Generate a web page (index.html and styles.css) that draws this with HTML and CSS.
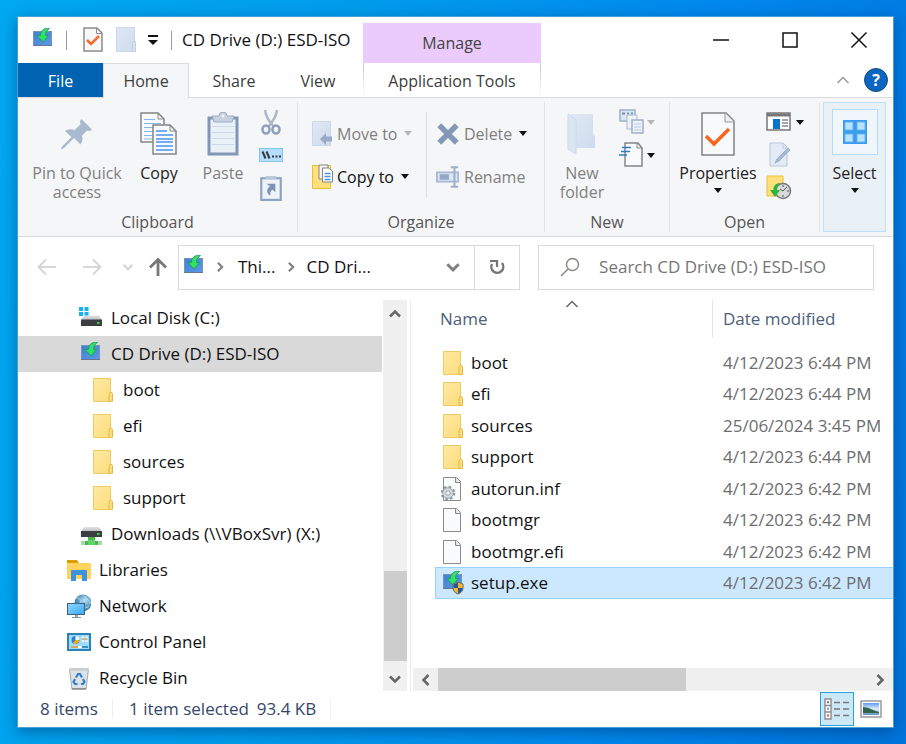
FILE: index.html
```html
<!DOCTYPE html>
<html lang="en">
<head>
<meta charset="utf-8">
<title>CD Drive (D:) ESD-ISO</title>
<link rel="stylesheet" href="styles.css">
</head>
<body>
<svg class="sprite" aria-hidden="true">
  <defs>
    <linearGradient id="g-blue" x1="0" y1="0" x2="1" y2="1"><stop offset="0" stop-color="#3f7fd0"/><stop offset="1" stop-color="#5b9ae8"/></linearGradient>
    <linearGradient id="g-green" x1="0" y1="0" x2="0" y2="1"><stop offset="0" stop-color="#3fd878"/><stop offset="1" stop-color="#24e85a"/></linearGradient>
    <linearGradient id="g-folder" x1="0" y1="0" x2="1" y2="1"><stop offset="0" stop-color="#ffe9a3"/><stop offset="1" stop-color="#fcdc7c"/></linearGradient>
    <linearGradient id="g-pale" x1="0" y1="0" x2="1" y2="1"><stop offset="0" stop-color="#dfe8f5"/><stop offset="1" stop-color="#cfdbec"/></linearGradient>
    <linearGradient id="g-disk" x1="0" y1="0" x2="0" y2="1"><stop offset="0" stop-color="#e4e4e6"/><stop offset="1" stop-color="#b4b6ba"/></linearGradient>
    <linearGradient id="g-screen" x1="0" y1="0" x2="1" y2="1"><stop offset="0" stop-color="#8fd8ff"/><stop offset="1" stop-color="#3aa6f4"/></linearGradient>
    <radialGradient id="g-globe" cx=".6" cy=".35" r=".7"><stop offset="0" stop-color="#c2e2f2"/><stop offset=".5" stop-color="#5fa3c8"/><stop offset="1" stop-color="#2c6d9c"/></radialGradient>
    <linearGradient id="g-photo" x1="0" y1="0" x2="0" y2="1"><stop offset="0" stop-color="#5e98f0"/><stop offset=".5" stop-color="#e2f0fb"/><stop offset="1" stop-color="#5c8fc0"/></linearGradient>
  </defs>
  <symbol id="i-install" viewBox="0 0 24 24">
    <rect x="2" y="3" width="19" height="15" fill="url(#g-blue)"/>
    <path d="M2 17.500h19" stroke="#66768f"/>
    <path d="M2.500 3v14M20.500 3v14M2 3.500h19" stroke="#7b93b8" fill="none"/>
    <path d="M18.500.500C12.500-.500 9.500 3 9.500 7.500H6L12 14l5.500-6.500H14.500c0-3 1-5 4-7z" fill="url(#g-green)" stroke="#149c50" stroke-width=".8"/>
  </symbol>
  <symbol id="i-setup" viewBox="0 0 24 24">
    <use href="#i-install"/>
    <path d="M17 11l5 2v4c0 3-2 5-5 6-3-1-5-3-5-6v-4z" fill="#f4b62c" stroke="#5d6878"/>
    <path d="M17 11.500l-4.500 2V17H17zM17 17v5.500c3-1 4.500-3 4.500-5.500z" fill="#23579c"/>
  </symbol>
  <symbol id="i-folder" viewBox="0 0 24 24">
    <path d="M2.500.500h17v14h1v9h-18z" fill="url(#g-folder)" stroke="#efca5e"/>
    <path d="M18 23.500v-7l1-2h1.500l1 1v8z" fill="#fbdd80" stroke="#e5b840"/>
  </symbol>
  <symbol id="i-paper" viewBox="0 0 24 24">
    <path d="M2.500.500h13l4 4v19h-17z" fill="#fafbfc" stroke="#8b8b8b"/>
    <path d="M14.500.500v5h5" fill="#e4e6e8" stroke="#8b8b8b"/>
  </symbol>
  <symbol id="i-inf" viewBox="0 0 24 24">
    <use href="#i-paper"/>
    <circle cx="7" cy="16" r="6" fill="none" stroke="#8c949c" stroke-width="2.500" stroke-dasharray="2.400 2.310"/>
    <circle cx="7" cy="16" r="4" fill="#fff" stroke="#d3dae1" stroke-width="3"/>
    <circle cx="7" cy="16" r="2.200" fill="#fff" stroke="#8c949c"/>
    <circle cx="7" cy="16" r="5.300" fill="none" stroke="#8c949c" stroke-width=".8"/>
  </symbol>
  <symbol id="i-disk" viewBox="0 0 24 24">
    <path d="M0 1h4v4H0zM5.500 1h4v4h-4zM0 6h4v4H0zM5.500 6h4v4h-4z" fill="#12b3f2"/>
    <path d="M5 9.500h15l3 5H2z" fill="url(#g-disk)"/>
    <path d="M2 13.500h21V20H2z" fill="#3b3d40"/><path d="M18 16h2.500v2H18z" fill="#35d23c"/>
  </symbol>
  <symbol id="i-netdisk" viewBox="0 0 24 24">
    <path d="M5 5h15l3 5H2z" fill="url(#g-disk)"/>
    <path d="M2 9h21v6H2z" fill="#3b3d40"/><path d="M18 11h2.500v2H18z" fill="#35d23c"/>
    <path d="M9 15h7v4h7v4H2v-4h7z" fill="#45b94a"/><path d="M9 18h7v5H9z" fill="#62d366"/><path d="M2 19h4v4H2zM19 19h4v4h-4z" fill="#a9d8ab"/>
  </symbol>
  <symbol id="i-libraries" viewBox="0 0 24 24">
    <path d="M0 2h10l2 3H0z" fill="#dd9d06"/><path d="M0 5h24v16H0z" fill="#ffd35c"/>
    <path d="M4 23V12h16v11h-5v-6H9v6z" fill="#3e93dc"/>
  </symbol>
  <symbol id="i-network" viewBox="0 0 24 24">
    <circle cx="16" cy="9" r="8.500" fill="url(#g-globe)"/>
    <path d="M10 4c4 1 5 3 3 5M18 2c0 4 6 3 5 8M16 16c1-3 5-2 6-4" stroke="#d8eef8" fill="none" opacity=".7"/>
    <rect x=".5" y="9.500" width="17" height="11" fill="url(#g-screen)" stroke="#44617a"/>
    <path d="M8 21h3v2H8z" fill="#9aa8b4"/><path d="M5 23.500h9" stroke="#8795a2"/>
  </symbol>
  <symbol id="i-control" viewBox="0 0 24 24">
    <rect x="1" y="4" width="22" height="16" fill="#9fdcfb" stroke="#2d80b8" stroke-width="2"/>
    <circle cx="8.500" cy="10" r="4" fill="#2384d0"/><path d="M8.500 10V6a4 4 0 0 1 4 4z" fill="#fff"/><path d="M8.500 10h4a4 4 0 0 1-6.500 3z" fill="#f4a81d"/>
    <path d="M15 7.500h2M18.500 7.500h2M15 11h2M18.500 11h2" stroke="#fff" stroke-width="2"/><path d="M15 9h5" stroke="#e8901d"/>
    <path d="M4 17h7" stroke="#e89b1d" stroke-width="1.500"/><path d="M11 17h4" stroke="#fff" stroke-width="2"/><path d="M15 17h6" stroke="#1878bc" stroke-width="1.500"/>
  </symbol>
  <symbol id="i-bin" viewBox="0 0 24 24">
    <path d="M2.500 3h19L19 23.500H5z" fill="#dfe2e5" stroke="#a5a9ad"/><path d="M2 3.500h20" stroke="#c7cacd" stroke-width="2"/><path d="M5 22.500h14" stroke="#8b9095"/>
    <path d="M9 11.500l2-3.500h2l2 3.500M16 13l1.500 3-1.500 2h-2M10.500 18H8l-1.500-2L8 13" stroke="#2d82cc" stroke-width="2.200" fill="none"/>
  </symbol>
  <symbol id="i-tick-doc" viewBox="0 0 20 26">
    <path d="M1 1h13l5 5v18H1z" fill="#f6f7f8" stroke="#8c8c8c" stroke-width="1.500"/><path d="M13.500 1v5.500H19" fill="none" stroke="#8c8c8c"/>
    <path d="M4 13l4 4 8-8" fill="none" stroke="#f96a28" stroke-width="2.500"/>
  </symbol>
  <symbol id="i-pale-folder" viewBox="0 0 20 26">
    <path d="M.500.500h18v14h1v10H.500z" fill="url(#g-pale)" stroke="#cbd8ea"/><path d="M16.500 24.500v-8l1-2h1l1 1v9z" fill="#d7e3f1" stroke="#bfcee4"/>
  </symbol>
  <symbol id="i-pin" viewBox="0 0 32 32">
    <path d="M20.500 1L31 11.500l-2 1.500-3-.5-5 5c1 3 .5 6-1.500 9l-6.500-6.500L3 30l-2.500 1.500-.5-.5L1.500 28 10.500 19 4 13c3-2 6.500-2 9.500-1l6-5.500L19 3z" fill="#a9b9cf"/>
  </symbol>
  <symbol id="i-copy" viewBox="0 0 38 44">
    <path d="M1 1h17l6 6v23H1z" fill="#f8fafc" stroke="#858585" stroke-width="1.500"/><path d="M18 1v6h6" fill="none" stroke="#858585"/>
    <path d="M4 7.500h11M4 11.500h17M4 15.500h17M4 19.500h9M4 23.500h9M4 27h9" stroke="#86b5ee"/>
    <path d="M13 13h17l6 6v23H13z" fill="#f8fafc" stroke="#858585" stroke-width="1.500"/><path d="M30 13v6h6" fill="none" stroke="#858585"/>
    <path d="M16 19h11M16 23h17M16 27h17M16 30h17M16 34h17M16 38h17" stroke="#4b93ef" stroke-width="1.500"/>
  </symbol>
  <symbol id="i-paste" viewBox="0 0 32 44">
    <rect x="2" y="6" width="28" height="36" fill="#e9f0f8" stroke="#8296b6" stroke-width="3"/>
    <path d="M5 14.500h22M5 20.500h22M5 26.500h22M5 32.500h22" stroke="#cbd9ea"/>
    <path d="M5 4h7a4 4 0 0 1 8 0h7l-2 6H7z" fill="#c8d2df" stroke="#9aabc2"/><circle cx="16" cy="4" r="1.500" fill="#eef3f8"/>
  </symbol>
  <symbol id="i-cut" viewBox="0 0 24 26">
    <path d="M6 1c1 7 3.500 11 8.500 16.500M18 1c-1 7-3.500 11-8.500 16.500" fill="none" stroke="#aeb8c6" stroke-width="2.500"/>
    <ellipse cx="7" cy="20.500" rx="3.500" ry="4" fill="none" stroke="#8c9fbd" stroke-width="2.500"/><ellipse cx="17" cy="20.500" rx="3.500" ry="4" fill="none" stroke="#8c9fbd" stroke-width="2.500"/>
  </symbol>
  <symbol id="i-path" viewBox="0 0 24 14">
    <rect x=".5" y=".5" width="23" height="13" fill="#b4defb" stroke="#88c4ec"/><path d="M3.500 3.500l3 7M7.500 3.500l3 7" stroke="#34383c" stroke-width="2"/><path d="M13 8.500h2M16.500 8.500h2M20 8.500h2" stroke="#34383c" stroke-width="2"/>
  </symbol>
  <symbol id="i-shortcut" viewBox="0 0 20 24">
    <rect x="1" y="3" width="18" height="20" fill="#eef3fa" stroke="#8fa2bf" stroke-width="2"/><path d="M5 1h10v3H5z" fill="#bcc8d8"/>
    <path d="M6 8h8v8l-2.500-2.500c-2 1-2.500 3-2 5.500-4-2-4-6.500-.5-8.500z" fill="#8093b3"/>
  </symbol>
  <symbol id="i-moveto" viewBox="0 0 22 26">
    <path d="M1.500.500h18v24h-18z" fill="url(#g-pale)" stroke="#cbd8ea"/><path d="M9 18l6-6v3.500h6v5h-6V24z" fill="#97abc8"/>
  </symbol>
  <symbol id="i-copyto" viewBox="0 0 22 26">
    <path d="M1.500 1.500h18v23h-18z" fill="#ffe07a" stroke="#e9be3c"/>
    <path d="M8 1h9v14H8z" fill="#f4f4f4" stroke="#858585"/><path d="M11.500 4h6l4 3v11h-10z" fill="#fff" stroke="#858585"/><path d="M13.500 9.500h6M13.500 12.500h6M13.500 15.500h6" stroke="#4b93ef" stroke-width="1.500"/>
  </symbol>
  <symbol id="i-delete" viewBox="0 0 22 22"><path d="M3 3l16 16M19 3L3 19" stroke="#8397b7" stroke-width="5"/></symbol>
  <symbol id="i-rename" viewBox="0 0 26 24">
    <rect x="1" y="7" width="23" height="10" fill="#dbe6f4" stroke="#a8bad4" stroke-width="2"/><path d="M4 9h10v6H4z" fill="#93a8c8"/>
    <path d="M16 1.500h8M20 1v22M16 22.500h8" stroke="#9db0cb" stroke-width="2.200"/>
  </symbol>
  <symbol id="i-newfolder" viewBox="0 0 30 42">
    <path d="M3 1h23v20l2 2v12H9z" fill="url(#g-pale)"/><path d="M1 1l8 6v34L1 36z" fill="#dbe6f3" stroke="#cbd9ea"/>
  </symbol>
  <symbol id="i-newitem" viewBox="0 0 26 26">
    <rect x="1" y="1" width="15" height="11" fill="#dbe5f1" stroke="#9eb0ca" stroke-width="1.500"/><path d="M3 4.500h3M8 4.500h2M12 4.500h2" stroke="#788fae" stroke-width="2"/>
    <path d="M8 6h10v14H8z" fill="#edf2f8" stroke="#a9b9cf"/><path d="M13 11h11v13H13z" fill="#edf2f8" stroke="#9eb0ca" stroke-width="1.500"/><path d="M15 15h7M15 18h7M15 21h7" stroke="#b6c7dd"/>
  </symbol>
  <symbol id="i-easy" viewBox="0 0 26 26">
    <path d="M6 1h13l4 5v18H6z" fill="#fafbfc" stroke="#858585" stroke-width="1.500"/><path d="M18 1v5h5" fill="none" stroke="#858585"/>
    <path d="M3 5.500h9M2 9.500h9M0 13h8" stroke="#2f7fc0" stroke-width="1.600"/>
  </symbol>
  <symbol id="i-properties" viewBox="0 0 34 44">
    <path d="M1 1h24l8 8v34H1z" fill="#f8f9fa" stroke="#828282" stroke-width="1.500"/><path d="M24 1v9h9" fill="#eee" stroke="#999"/>
    <path d="M5 24l8 8 15-15" fill="none" stroke="#f9651c" stroke-width="3.500"/>
  </symbol>
  <symbol id="i-open" viewBox="0 0 26 20">
    <rect x="1" y="1" width="23" height="17" fill="#fff" stroke="#777" stroke-width="1.500"/><path d="M1 3h23" stroke="#777" stroke-width="3"/><path d="M7 7h7v10H7z" fill="#0872cf"/><path d="M16 8h6M16 11h6M16 14h6" stroke="#888" stroke-width="1.500"/>
  </symbol>
  <symbol id="i-edit" viewBox="0 0 26 26">
    <path d="M4 1h13l4 4v19H4z" fill="#e2eaf5" stroke="#b8c7dc"/><path d="M17 1v5h4" fill="none" stroke="#b8c7dc"/><path d="M9 21l2-4L22 6l2 2-11 11z" fill="#a9bad3" stroke="#91a6c3" stroke-width=".8"/>
  </symbol>
  <symbol id="i-history" viewBox="0 0 26 26">
    <path d="M1 1h16v20H1z" fill="#ffe07a" stroke="#e9be3c"/><circle cx="17" cy="16" r="7.500" fill="#d9d9d9" stroke="#777" stroke-width="1.500"/><path d="M17 10v2M17 20v2M11 16h2M21 16h2M14 14l3 2 4-4" stroke="#555" fill="none"/>
    <path d="M14 8C9 8 7 12 7.500 15H4l5 7 5-7h-3c0-3 1-5 3-7z" fill="#2fb53a"/>
  </symbol>
  <symbol id="i-select" viewBox="0 0 26 26">
    <path d="M1 1h24v24H1z" fill="#3b9ced"/><path d="M3 3h8v8H3zM15 3h8v8h-8zM3 15h8v8H3zM15 15h8v8h-8z" fill="#b9e2ff"/><path d="M3 3h8v8H3zM15 3h8v8h-8zM3 15h8v8H3zM15 15h8v8h-8z" fill="none" stroke="#62b4f4"/>
  </symbol>
  <symbol id="i-back" viewBox="0 0 20 18"><path d="M19 9H2M9 1.500L1.500 9 9 16.500" fill="none" stroke="currentColor" stroke-width="2"/></symbol>
  <symbol id="i-chevron" viewBox="0 0 14 14"><path d="M2 4.500L7 9.500l5-5" fill="none" stroke="currentColor" stroke-width="2.500"/></symbol>
  <symbol id="i-thin" viewBox="0 0 14 14"><path d="M1.500 4L7 9.500 12.500 4" fill="none" stroke="currentColor" stroke-width="1.500"/></symbol>
</svg>

<main class="window">
  <header class="titlebar">
    <div class="quick">
      <svg class="ic24"><use href="#i-install"/></svg>
      <i class="bar"></i>
      <button class="plain" aria-label="Properties"><svg class="qdoc"><use href="#i-tick-doc"/></svg></button>
      <button class="plain" aria-label="New folder"><svg class="qdoc"><use href="#i-pale-folder"/></svg></button>
      <button class="plain customize" aria-label="Customize toolbar"><i class="caret wide"></i></button>
      <i class="bar"></i>
      <h1>CD Drive (D:) ESD-ISO</h1>
    </div>
    <div class="manage">Manage</div>
    <div class="controls">
      <button class="plain" aria-label="Minimize"><svg viewBox="0 0 18 18"><path d="M1 9h16" stroke="#111" stroke-width="1.500"/></svg></button>
      <button class="plain" aria-label="Maximize"><svg viewBox="0 0 18 18"><path d="M2 2h14v14H2z" fill="none" stroke="#111" stroke-width="1.500"/></svg></button>
      <button class="plain" aria-label="Close"><svg viewBox="0 0 18 18"><path d="M1.500 1.500l15 15M16.500 1.500l-15 15" stroke="#111" stroke-width="1.500"/></svg></button>
    </div>
  </header>

  <nav class="tabs">
    <button class="tab file">File</button>
    <button class="tab home">Home</button>
    <button class="tab share">Share</button>
    <button class="tab view">View</button>
    <button class="tab tools">Application Tools</button>
    <span class="tabs-end">
      <button class="plain" aria-label="Collapse ribbon"><svg class="ic14 flip collapse"><use href="#i-thin"/></svg></button>
      <button class="help" aria-label="Help">?</button>
    </span>
  </nav>

  <section class="ribbon">
    <div class="group clipboard">
      <div class="tools-row">
        <button class="big off pin"><span class="art"><svg class="s-pin"><use href="#i-pin"/></svg></span>Pin to Quick access</button>
        <button class="big copy"><span class="art"><svg class="s-copy"><use href="#i-copy"/></svg></span>Copy</button>
        <button class="big off paste"><span class="art"><svg class="s-paste"><use href="#i-paste"/></svg></span>Paste</button>
        <div class="stack">
          <button class="mini" aria-label="Cut"><svg class="s-small"><use href="#i-cut"/></svg></button>
          <button class="mini" aria-label="Copy path"><svg class="s-path"><use href="#i-path"/></svg></button>
          <button class="mini" aria-label="Paste shortcut"><svg class="s-small"><use href="#i-shortcut"/></svg></button>
        </div>
      </div>
      <h2>Clipboard</h2>
    </div>
    <div class="group organize">
      <div class="tools-row">
        <div class="pair first">
          <button class="line off"><svg class="s-line"><use href="#i-moveto"/></svg>Move to<i class="caret dim"></i></button>
          <button class="line"><svg class="s-line"><use href="#i-copyto"/></svg>Copy to<i class="caret"></i></button>
        </div>
        <div class="pair second">
          <button class="line off"><svg class="s-line"><use href="#i-delete"/></svg>Delete<i class="caret"></i></button>
          <button class="line off"><svg class="s-line"><use href="#i-rename"/></svg>Rename</button>
        </div>
      </div>
      <h2>Organize</h2>
    </div>
    <div class="group new">
      <div class="tools-row">
        <button class="big off newf"><span class="art"><svg class="s-newf"><use href="#i-newfolder"/></svg></span>New folder</button>
        <div class="stack">
          <button class="mini" aria-label="New item"><svg class="s-small"><use href="#i-newitem"/></svg><i class="caret dim"></i></button>
          <button class="mini" aria-label="Easy access"><svg class="s-small"><use href="#i-easy"/></svg><i class="caret"></i></button>
        </div>
      </div>
      <h2>New</h2>
    </div>
    <div class="group open">
      <div class="tools-row">
        <button class="big props"><span class="art"><svg class="s-props"><use href="#i-properties"/></svg></span>Properties<i class="caret"></i></button>
        <div class="stack">
          <button class="mini" aria-label="Open"><svg class="s-small"><use href="#i-open"/></svg><i class="caret"></i></button>
          <button class="mini" aria-label="Edit"><svg class="s-small"><use href="#i-edit"/></svg></button>
          <button class="mini" aria-label="History"><svg class="s-small"><use href="#i-history"/></svg></button>
        </div>
      </div>
      <h2>Open</h2>
    </div>
    <button class="big select"><span class="art"><svg class="s-select"><use href="#i-select"/></svg></span>Select<i class="caret"></i></button>
  </section>

  <div class="navbar">
    <div class="arrows">
      <button class="plain faint" aria-label="Back"><svg class="s-arrow"><use href="#i-back"/></svg></button>
      <button class="plain faint" aria-label="Forward"><svg class="s-arrow mirror"><use href="#i-back"/></svg></button>
      <button class="plain faint" aria-label="Recent locations"><svg class="s-tiny"><use href="#i-chevron"/></svg></button>
      <button class="plain up" aria-label="Up"><svg class="s-up" viewBox="0 0 20 20"><path d="M10 19V3M2 10.500L10 2.500l8 8" fill="none" stroke="#777" stroke-width="2.800"/></svg></button>
    </div>
    <div class="address">
      <svg class="ic24"><use href="#i-install"/></svg>
      <svg class="ic12 right"><use href="#i-chevron"/></svg>
      <button class="crumb">Thi...</button>
      <svg class="ic12 right"><use href="#i-chevron"/></svg>
      <button class="crumb">CD Dri...</button>
      <button class="plain drop" aria-label="Previous locations"><svg class="s-drop"><use href="#i-chevron"/></svg></button>
      <button class="plain refresh" aria-label="Refresh"><svg class="s-refresh" viewBox="0 0 18 18"><path d="M14 5A6 6 0 1 1 4 6" fill="none" stroke="#757575" stroke-width="2.400"/><path d="M2 3h7v6" fill="none" stroke="#757575" stroke-width="2.200"/></svg></button>
    </div>
    <label class="search">
      <svg class="s-lens" viewBox="0 0 20 20"><circle cx="12.500" cy="7.500" r="6" fill="none" stroke="#8c8480" stroke-width="1.400"/><path d="M8 12l-7 7" stroke="#8c8480" stroke-width="1.400"/></svg>
      <input type="text" aria-label="Search" placeholder="Search CD Drive (D:) ESD-ISO">
    </label>
  </div>

  <div class="panes">
    <ul class="tree">
      <li class="l2"><svg class="ic24"><use href="#i-disk"/></svg>Local Disk (C:)</li>
      <li class="l2 current"><svg class="ic24"><use href="#i-install"/></svg>CD Drive (D:) ESD-ISO</li>
      <li class="l3"><svg class="ic24"><use href="#i-folder"/></svg>boot</li>
      <li class="l3"><svg class="ic24"><use href="#i-folder"/></svg>efi</li>
      <li class="l3"><svg class="ic24"><use href="#i-folder"/></svg>sources</li>
      <li class="l3"><svg class="ic24"><use href="#i-folder"/></svg>support</li>
      <li class="l2"><svg class="ic24"><use href="#i-netdisk"/></svg>Downloads (\\VBoxSvr) (X:)</li>
      <li class="l1"><svg class="ic24"><use href="#i-libraries"/></svg>Libraries</li>
      <li class="l1"><svg class="ic24"><use href="#i-network"/></svg>Network</li>
      <li class="l1"><svg class="ic24"><use href="#i-control"/></svg>Control Panel</li>
      <li class="l1"><svg class="ic24"><use href="#i-bin"/></svg>Recycle Bin</li>
    </ul>
    <div class="vscroll">
      <svg class="ic14 flip"><use href="#i-chevron"/></svg>
      <i class="thumb"></i>
      <svg class="ic14"><use href="#i-chevron"/></svg>
    </div>
    <section class="files">
      <table>
        <colgroup><col class="c-name"><col></colgroup>
        <thead><tr><th scope="col" class="sorted">Name<svg class="ic14 flip sort"><use href="#i-thin"/></svg></th><th scope="col">Date modified</th></tr></thead>
        <tbody>
          <tr><td><svg class="ic24"><use href="#i-folder"/></svg>boot</td><td>4/12/2023 6:44 PM</td></tr>
          <tr><td><svg class="ic24"><use href="#i-folder"/></svg>efi</td><td>4/12/2023 6:44 PM</td></tr>
          <tr><td><svg class="ic24"><use href="#i-folder"/></svg>sources</td><td>25/06/2024 3:45 PM</td></tr>
          <tr><td><svg class="ic24"><use href="#i-folder"/></svg>support</td><td>4/12/2023 6:44 PM</td></tr>
          <tr><td><svg class="ic24"><use href="#i-inf"/></svg>autorun.inf</td><td>4/12/2023 6:42 PM</td></tr>
          <tr><td><svg class="ic24"><use href="#i-paper"/></svg>bootmgr</td><td>4/12/2023 6:42 PM</td></tr>
          <tr><td><svg class="ic24"><use href="#i-paper"/></svg>bootmgr.efi</td><td>4/12/2023 6:42 PM</td></tr>
          <tr class="chosen"><td><svg class="ic24"><use href="#i-setup"/></svg>setup.exe</td><td>4/12/2023 6:42 PM</td></tr>
        </tbody>
      </table>
      <div class="hscroll">
        <svg class="ic14 left"><use href="#i-chevron"/></svg>
        <i class="thumb"></i>
        <svg class="ic14 right"><use href="#i-chevron"/></svg>
      </div>
    </section>
  </div>

  <footer class="status">
    <span class="count">8 items</span>
    <span class="picked">1 item selected</span>
    <span class="size">93.4 KB</span>
    <span class="modes">
      <button class="mode on" aria-label="Details view"><svg class="s-mode" viewBox="0 0 26 22"><path d="M1 1h6v20H1zM1 7.500h6M1 14h6" fill="#fff" stroke="#8c8c8c" stroke-width="1.400"/><path d="M3 4.200h2" stroke="#777" stroke-width="2"/><path d="M3 10.800h2" stroke="#6d9ddd" stroke-width="2"/><path d="M3 17.500h2" stroke="#de5a4a" stroke-width="2"/><path d="M10 4.500h6M19 4.500h6M10 11h6M19 11h6M10 17.500h6M19 17.500h6" stroke="#777" stroke-width="1.500"/></svg></button>
      <button class="mode" aria-label="Large icons view"><svg class="s-thumb" viewBox="0 0 22 18"><path d="M1 1h20v16H1z" fill="#fff" stroke="#999" stroke-width="1.500"/><path d="M3 3h16v12H3z" fill="url(#g-photo)"/><path d="M3 7c5 0 9 3 16 5v1H3z" fill="#32634d"/></svg></button>
    </span>
  </footer>
</main>
</body>
</html>
```
FILE: styles.css
```css
* { box-sizing: border-box; }

body {
  margin: 0;
  min-height: 100vh;
  padding: 16px 12px 16px 17px;
  display: flex;
  background: linear-gradient(100deg, #00a8f0 0%, #009cec 35%, #0088ec 70%, #0074dc 100%);
  font-family: "Open Sans", "Noto Sans", sans-serif;
  font-size: 17px;
  line-height: 20px;
  color: #111;
}

.sprite { position: absolute; width: 0; height: 0; }
svg { display: block; flex: none; }
button {
  font: inherit;
  color: inherit;
  border: 0;
  padding: 0;
  background: none;
}
.plain { display: flex; align-items: center; justify-content: center; }

.ic24 { width: 24px; height: 24px; }
.ic14 { width: 14px; height: 14px; color: #666; }
.ic12 { width: 12px; height: 12px; color: #808080; }
.flip { transform: rotate(180deg); }
.right { transform: rotate(-90deg); }
.left { transform: rotate(90deg); }
.mirror { transform: scaleX(-1); }

.caret {
  flex: none;
  display: inline-block;
  border: 4px solid transparent;
  border-top: 5px solid #111;
  border-bottom: 0;
}
.caret.dim { border-top-color: #b5b8bb; }

.window {
  flex: 1;
  min-width: 0;
  display: flex;
  flex-direction: column;
  background: #fff;
  border: 1px solid #4a9fd4;
  box-shadow: 0 4px 14px rgba(0, 40, 90, .45);
}

/* title bar */
.titlebar { display: flex; height: 46px; }
.quick { flex: 0 0 345px; display: flex; align-items: center; padding-left: 13px; white-space: nowrap; }
.quick .bar { width: 1px; height: 19px; margin-left: 11px; background: #999; }
.quick .bar + button { margin-left: 16px; }
.qdoc { width: 20px; height: 26px; }
.quick .plain + .plain { margin-left: 13px; }
.quick .plain.customize { margin-left: 12px; }
.quick .customize + .bar { margin-left: 13px; }
.customize { height: 10px; align-items: flex-end; position: relative; }
.customize::before { content: ""; position: absolute; top: 0; left: 0; right: 0; height: 2px; background: #111; }
.caret.wide { border-left-width: 5px; border-right-width: 5px; }
.titlebar h1 { margin: 0 0 0 10px; font-size: 17px; font-weight: 400; }
.manage {
  flex: 0 0 178px;
  margin-top: 6px;
  display: flex;
  align-items: center;
  justify-content: center;
  background: #eacbfc;
  color: #444;
  font-size: 16px;
}
.controls { margin-left: auto; display: flex; }
.controls button { width: 69px; }
.controls svg { width: 18px; height: 18px; }

/* ribbon tabs */
.tabs { display: flex; height: 35px; border-bottom: 1px solid #dadbdc; color: #3c3c3c; font-size: 16px; }
.tab { height: 35px; }
.file { width: 85px; height: 34px; padding-top: 2px; background: #0063b1; color: #fff; }
.home { width: 86px; background: #f5f6f7; border: 1px solid #dadbdc; border-bottom: 0; }
.share { width: 90px; }
.view { width: 78px; margin-right: 6px; }
.tools {
  width: 178px;
  height: 34px;
  padding-top: 2px;
  border: solid;
  border-width: 0 1px;
  border-image: linear-gradient(#c4c4c4, #fff) 1;
}
.tabs-end { margin-left: auto; display: flex; align-items: center; gap: 14px; padding-right: 5px; }
.collapse { color: #999; }
.help {
  width: 24px;
  height: 24px;
  border: 1px solid #1c4a78;
  border-radius: 50%;
  background: #0a66c2;
  color: #fff;
  font-weight: 700;
  line-height: 20px;
}

/* ribbon */
.ribbon {
  display: grid;
  grid-template-columns: 280fr 247fr 125fr 150fr 73fr;
  height: 139px;
  padding-top: 4px;
  background: #f5f6f7;
  border-bottom: 1px solid #dadbdc;
  font-size: 16px;
}
.group {
  display: flex;
  flex-direction: column;
  justify-content: space-between;
  height: 130px;
  border-right: 1px solid #e0e2e4;
}
.group h2 { margin: 0; font-size: 16px; font-weight: 400; text-align: center; color: #555; }
.tools-row { display: flex; padding-top: 6px; }
.big { display: flex; flex-direction: column; align-items: center; line-height: 19px; color: #222; }
.big.off { color: #808080; }
.art { height: 56px; padding-bottom: 4px; display: flex; align-items: center; justify-content: center; }
.big .caret { margin-top: 5px; }
.off { color: #808080; }
.pin { width: 98px; margin-left: 10px; }
.copy { width: 66px; }
.paste { width: 62px; }
.s-pin { width: 32px; height: 32px; }
.s-copy { width: 38px; height: 44px; }
.s-paste { width: 32px; height: 44px; }
.stack { display: flex; flex-direction: column; gap: 7px; padding-top: 1px; }
.mini { display: flex; align-items: center; justify-content: center; gap: 2px; height: 26px; }
.s-small { width: 26px; height: 26px; }
.s-path { width: 24px; height: 14px; }
.clipboard .stack { margin-left: 4px; }

.pair { display: flex; flex-direction: column; margin-top: 4px; }
.first { width: 129px; padding-left: 13px; border-right: 1px solid #dcdfe2; }
.second { padding-left: 9px; }
.line { display: flex; align-items: center; height: 43px; gap: 4px; white-space: nowrap; }
.line .caret { margin-left: 3px; }
.s-line { width: 22px; height: 26px; }
.second .s-line { width: 24px; }

.newf { width: 60px; margin-left: 7px; }
.s-newf { width: 30px; height: 42px; }
.new .stack { margin-left: 7px; }
.props { width: 84px; margin-left: 6px; }
.s-props { width: 34px; height: 44px; }
.open .stack { margin-left: 6px; }
.open .mini { justify-content: flex-start; gap: 4px; }
.select {
  height: 130px;
  margin: 0 7px 0 3px;
  padding-top: 6px;
  background: #e9f1f7;
  border: 1px solid #c0dff8;
}
.select .art { width: 46px; height: 46px; padding-bottom: 0; margin-bottom: 9px; background: #f0f6fb; border: 1px solid #b5dafa; }
.s-select { width: 26px; height: 26px; }

/* navigation bar */
.navbar {
  display: grid;
  grid-template-columns: 160px minmax(0, 342fr) minmax(0, 336fr);
  column-gap: 0;
  align-items: center;
  height: 63px;
  padding: 0 19px 3px 0;
}
.arrows { display: flex; align-items: center; padding-left: 19px; }
.faint { color: #d6d6d6; }
.s-arrow { width: 20px; height: 18px; }
.arrows .faint:nth-child(2) { margin-left: 25px; }
.arrows .faint:nth-child(3) { margin-left: 20px; }
.s-tiny { width: 12px; height: 12px; }
.up { margin-left: 14px; }
.s-up { width: 20px; height: 20px; }
.address {
  display: flex;
  align-items: center;
  height: 45px;
  margin-right: 9px;
  padding-left: 3px;
  border: 1px solid #d9d9d9;
}
.address .ic12 { margin: 0 12px 0 8px; }
.address .crumb + .ic12 { margin: 0 9px 0 10px; }
.drop { margin-left: auto; margin-right: 13px; color: #808080; }
.s-drop { width: 16px; height: 16px; }
.refresh { width: 45px; height: 43px; border-left: 1px solid #d9d9d9; }
.s-refresh { width: 18px; height: 18px; }
.search {
  display: flex;
  align-items: center;
  min-width: 0;
  height: 45px;
  margin-left: 9px;
  padding-left: 21px;
  gap: 19px;
  border: 1px solid #d9d9d9;
}
.s-lens { width: 20px; height: 20px; }
.search input { flex: 1; min-width: 0; border: 0; padding: 0; font: inherit; background: none; }
.search input::placeholder { color: #757575; opacity: 1; }

/* panes */
.panes {
  flex: 1 1 0;
  min-height: 391px;
  display: grid;
  grid-template-columns: minmax(0, 365fr) 24px minmax(0, 486fr);
  overflow: hidden;
}
.tree { height: 391px; overflow: hidden; margin: 0; padding: 0; list-style: none; }
.tree li { display: flex; align-items: center; gap: 8px; height: 36px; margin-right: 1px; white-space: nowrap; }
.tree .l1 { padding-left: 49px; }
.tree .l2 { padding-left: 61px; }
.tree .l3 { padding-left: 73px; }
.tree .current { background: #d9d9d9; }
.vscroll {
  display: flex;
  flex-direction: column;
  align-items: center;
  justify-content: space-between;
  padding: 7px 0 5px;
  background: #f0f0f0;
}
.vscroll .thumb { width: 23px; height: 90px; margin-top: auto; margin-bottom: 11px; background: #cdcdcd; }
.files {
  min-width: 0;
  display: flex;
  flex-direction: column;
  justify-content: space-between;
  margin-left: 3px;
  border-left: 1px solid #ececec;
}
table {
  width: calc(100% - 24px);
  margin-left: 24px;
  border-collapse: separate;
  border-spacing: 0;
  table-layout: fixed;
}
.c-name { width: 278px; }
th { position: relative; height: 38px; padding: 0 0 0 10px; text-align: left; font-weight: 400; color: #4c607a; }
th:first-child { padding-left: 5px; border-right: 1px solid #e4e4e4; }
.sort { position: absolute; top: -3px; left: 47%; }
thead::after { content: ""; display: block; height: 9px; }
td { height: 31px; padding: 0 0 0 10px; white-space: nowrap; color: #6d6d6d; }
tr:nth-child(even) td { height: 32px; }
td:first-child { display: flex; align-items: center; gap: 6px; padding-left: 6px; color: #111; }
.chosen td { background: #cce8ff; border: solid #99d1ff; border-width: 1px 0; }
.chosen td:first-child { border-left-width: 1px; padding-left: 5px; }
.hscroll { display: flex; align-items: center; height: 23px; margin-left: 2px; padding: 0 6px; background: #f0f0f0; }
.hscroll .thumb { width: 53%; height: 23px; margin-left: 5px; background: #cdcdcd; }
.hscroll .right { margin-left: auto; }

/* status bar */
.status { display: flex; align-items: center; height: 36px; color: #33476a; }
.count { width: 95px; padding-left: 22px; border-right: 1px solid #eee; }
.picked { padding-left: 16px; }
.size { margin-left: 8px; padding-right: 14px; border-right: 1px solid #eee; }
.modes { margin-left: auto; display: flex; align-items: center; padding-right: 5px; }
.mode { width: 34px; height: 34px; display: flex; align-items: center; justify-content: center; }
.mode.on { background: #cce8f6; border: 1px solid #26a0da; }
.s-mode { width: 26px; height: 22px; }
.s-thumb { width: 22px; height: 18px; }
```
